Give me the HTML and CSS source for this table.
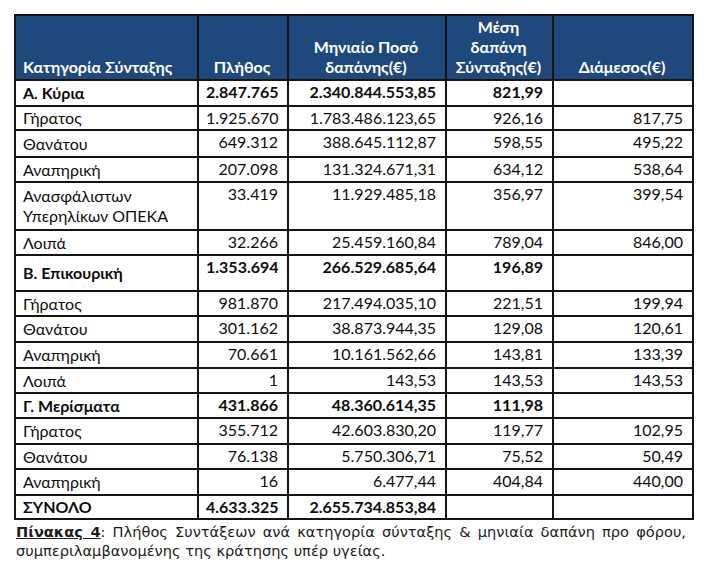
FILE: index.html
```html
<!DOCTYPE html>
<html lang="el">
<head>
<meta charset="utf-8">
<link rel="stylesheet" href="styles.css">
</head>
<body>
<div class="page">
<table class="stats">
<colgroup>
<col class="c1"><col class="c2"><col class="c3"><col class="c4"><col class="c5">
</colgroup>
<thead>
<tr class="hdr">
<th class="lbl">Κατηγορία Σύνταξης</th>
<th>Πλήθος</th>
<th>Μηνιαίο Ποσό<br>δαπάνης(€)</th>
<th>Μέση<br>δαπάνη<br>Σύνταξης(€)</th>
<th>Διάμεσος(€)</th>
</tr>
</thead>
<tbody>
<tr class="r26 grp"><td class="lbl">Α. Κύρια</td><td>2.847.765</td><td>2.340.844.553,85</td><td>821,99</td><td></td></tr>
<tr class="r24"><td class="lbl">Γήρατος</td><td>1.925.670</td><td>1.783.486.123,65</td><td>926,16</td><td>817,75</td></tr>
<tr class="r27"><td class="lbl">Θανάτου</td><td>649.312</td><td>388.645.112,87</td><td>598,55</td><td>495,22</td></tr>
<tr class="r25"><td class="lbl">Αναπηρική</td><td>207.098</td><td>131.324.671,31</td><td>634,12</td><td>538,64</td></tr>
<tr class="r48"><td class="lbl">Ανασφάλιστων<br>Υπερηλίκων ΟΠΕΚΑ</td><td>33.419</td><td>11.929.485,18</td><td>356,97</td><td>399,54</td></tr>
<tr class="r25"><td class="lbl">Λοιπά</td><td>32.266</td><td>25.459.160,84</td><td>789,04</td><td>846,00</td></tr>
<tr class="r36 grp"><td class="lbl">Β. Επικουρική</td><td>1.353.694</td><td>266.529.685,64</td><td>196,89</td><td></td></tr>
<tr class="r25"><td class="lbl">Γήρατος</td><td>981.870</td><td>217.494.035,10</td><td>221,51</td><td>199,94</td></tr>
<tr class="r26"><td class="lbl">Θανάτου</td><td>301.162</td><td>38.873.944,35</td><td>129,08</td><td>120,61</td></tr>
<tr class="r26"><td class="lbl">Αναπηρική</td><td>70.661</td><td>10.161.562,66</td><td>143,81</td><td>133,39</td></tr>
<tr class="r25"><td class="lbl">Λοιπά</td><td>1</td><td>143,53</td><td>143,53</td><td>143,53</td></tr>
<tr class="r25 grp"><td class="lbl">Γ. Μερίσματα</td><td>431.866</td><td>48.360.614,35</td><td>111,98</td><td></td></tr>
<tr class="r26"><td class="lbl">Γήρατος</td><td>355.712</td><td>42.603.830,20</td><td>119,77</td><td>102,95</td></tr>
<tr class="r25"><td class="lbl">Θανάτου</td><td>76.138</td><td>5.750.306,71</td><td>75,52</td><td>50,49</td></tr>
<tr class="r26"><td class="lbl">Αναπηρική</td><td>16</td><td>6.477,44</td><td>404,84</td><td>440,00</td></tr>
<tr class="r24 grp"><td class="lbl">ΣΥΝΟΛΟ</td><td>4.633.325</td><td>2.655.734.853,84</td><td></td><td></td></tr>
</tbody>
</table>
<p class="caption"><span class="cap-title">Πίνακας 4</span>: Πλήθος Συντάξεων ανά κατηγορία σύνταξης &amp; μηνιαία δαπάνη προ φόρου, συμπεριλαμβανομένης της κράτησης υπέρ υγείας.</p>
</div>
</body>
</html>
```

FILE: styles.css
```css
html, body {
  margin: 0;
  padding: 0;
  background: #ffffff;
}

.page {
  padding: 14px 0 0 14px;
  width: 680px;
}

.stats {
  border-collapse: collapse;
  table-layout: fixed;
  width: 680px;
  font-family: Lato, "Liberation Sans", sans-serif;
  font-size: 16px;
  color: #0d0d0d;
}

.c1 { width: 183px; }
.c2 { width: 90px; }
.c3 { width: 158px; }
.c4 { width: 107px; }
.c5 { width: 140px; }

.stats th,
.stats td {
  border: 2px solid #141414;
  padding: 0 9px 0 7px;
  line-height: 20px;
}

.stats th {
  background: #1f497d;
  color: #ffffff;
  font-weight: 700;
  text-align: center;
  vertical-align: bottom;
  padding-bottom: 2px;
}

.stats th.lbl {
  text-align: left;
}

.stats td {
  text-align: right;
  vertical-align: top;
  padding-top: 1px;
}

.stats td.lbl {
  text-align: left;
  vertical-align: middle;
  padding-top: 0;
}

.stats .grp td {
  font-weight: 700;
}

.hdr { height: 65px; }
.r24 { height: 24px; }
.r25 { height: 25px; }
.r26 { height: 26px; }
.r27 { height: 27px; }
.r36 { height: 36px; }
.r48 { height: 48px; }

.caption {
  margin: 2px 0 0 2px;
  width: 670px;
  font-family: "DejaVu Sans", Verdana, sans-serif;
  font-size: 14.6px;
  line-height: 19px;
  color: #1c1c1c;
  text-align: justify;
}

.cap-title {
  font-weight: 700;
  text-decoration: underline;
}
```
